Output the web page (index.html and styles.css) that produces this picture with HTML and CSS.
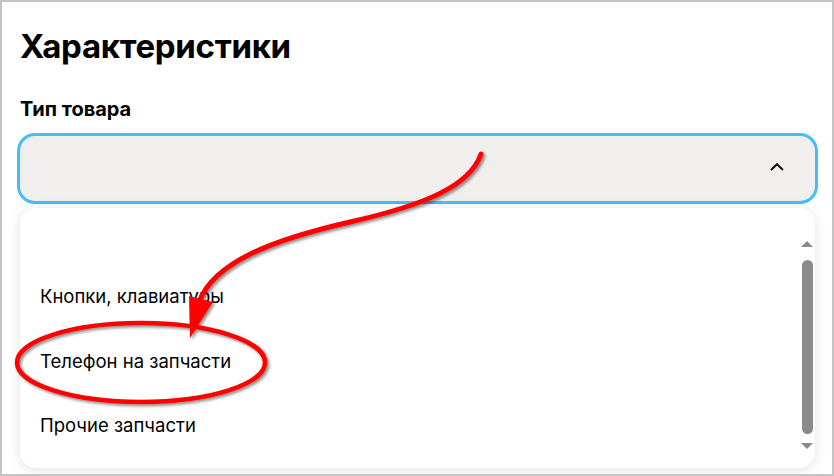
FILE: index.html
```html
<!DOCTYPE html>
<html lang="ru">
<head>
<meta charset="utf-8">
<title>Характеристики</title>
<link rel="stylesheet" href="styles.css">
</head>
<body>
<div class="frame">
  <h1 class="title">Характеристики</h1>
  <div class="label">Тип товара</div>
  <div class="select">
    <span class="select-value"></span>
    <svg class="chevron" viewBox="0 0 14 8" width="14" height="8"><path d="M1 7 L7 1.2 L13 7" fill="none" stroke="#111" stroke-width="2"/></svg>
  </div>
  <div class="panel">
    <ul class="options">
      <li class="option">Кнопки, клавиатуры</li>
      <li class="option">Телефон на запчасти</li>
      <li class="option">Прочие запчасти</li>
    </ul>
    <div class="scrollbar">
      <span class="sb-up"></span>
      <span class="sb-thumb"></span>
      <span class="sb-down"></span>
    </div>
  </div>
  <svg class="annotation" viewBox="0 0 834 476" width="834" height="476">
    <defs>
      <filter id="sh" x="-10%" y="-10%" width="130%" height="130%">
        <feDropShadow dx="2" dy="2" stdDeviation="1.4" flood-color="#000" flood-opacity="0.45"/>
      </filter>
    </defs>
    <g filter="url(#sh)">
      <path d="M481 154 C470 186, 425 205, 350 222 C272 240, 214 262, 199 302" fill="none" stroke="#ff0000" stroke-width="5" stroke-linecap="round"/>
      <polygon points="189,296 213,302 190,338" fill="#ff0000"/>
      <ellipse cx="141" cy="362.5" rx="124" ry="39.5" fill="none" stroke="#ff0000" stroke-width="4.5"/>
    </g>
  </svg>
</div>
</body>
</html>
```

FILE: styles.css
```css
* { box-sizing: border-box; }
html, body { margin: 0; padding: 0; background: #fff; }
body { font-family: Inter, "Noto Sans", "Liberation Sans", sans-serif; color: #000; }

.frame {
  position: relative;
  width: 834px;
  height: 476px;
  border: 2px solid #c4c4c4;
  background: #fff;
  overflow: hidden;
  display: flex;
  flex-direction: column;
}

.title {
  margin: 24px 0 0 18px;
  font-size: 33px;
  line-height: 40px;
  font-weight: 700;
  letter-spacing: -0.3px;
}

.label {
  margin: 32px 0 0 18px;
  font-size: 20px;
  line-height: 22px;
  font-weight: 700;
}

.select {
  margin: 13px 0 0 15px;
  width: 801px;
  height: 71px;
  border: 3px solid #47bdf6;
  border-radius: 18px;
  background: #f0efed;
  display: flex;
  align-items: center;
  justify-content: space-between;
  padding: 0 31px 0 20px;
}

.chevron { display: block; margin-top: -4px; }

.panel {
  margin: 4px 0 0 18px;
  width: 795px;
  height: 260px;
  background: #fff;
  border-radius: 16px;
  box-shadow: 0 2px 14px rgba(0, 0, 0, 0.12);
  display: flex;
}

.options {
  flex: 1;
  list-style: none;
  margin: 0;
  padding: 56px 0 0 20px;
}

.option {
  height: 64.5px;
  line-height: 64.5px;
  font-size: 18.5px;
  font-weight: 400;
}

.scrollbar {
  width: 12px;
  margin-right: 2px;
  padding-top: 33px;
  display: flex;
  flex-direction: column;
  align-items: center;
}

.sb-up {
  width: 0; height: 0;
  border-left: 6px solid transparent;
  border-right: 6px solid transparent;
  border-bottom: 6px solid #8a8a8a;
}

.sb-thumb {
  margin-top: 13px;
  width: 11px;
  height: 174px;
  border-radius: 6px;
  background: #8a8a8a;
}

.sb-down {
  margin-top: 9px;
  width: 0; height: 0;
  border-left: 6px solid transparent;
  border-right: 6px solid transparent;
  border-top: 6px solid #8a8a8a;
}

.annotation {
  position: absolute;
  top: -2px;
  left: -2px;
  pointer-events: none;
}
```
